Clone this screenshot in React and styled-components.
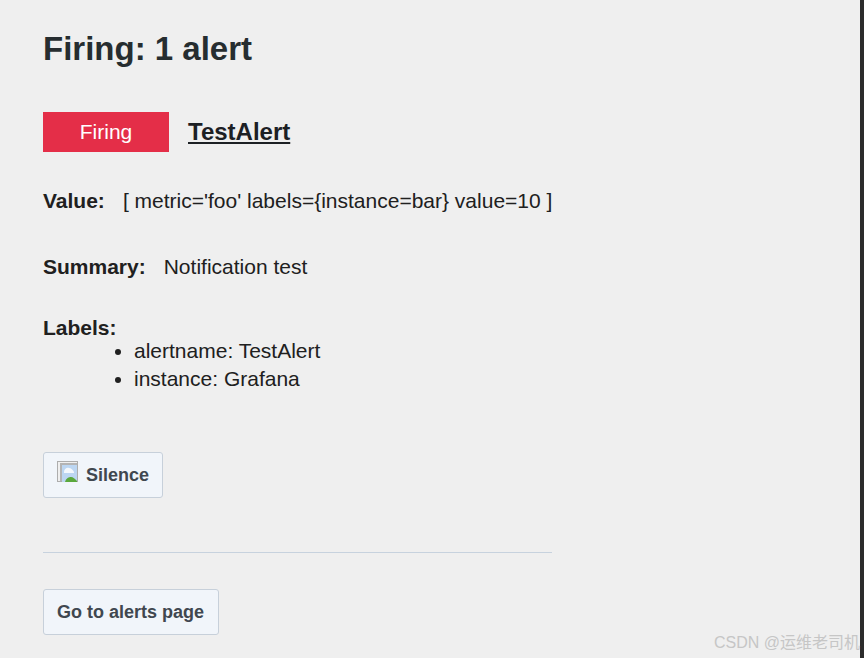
import React from "react";
import styled, { createGlobalStyle } from "styled-components";

const Global = createGlobalStyle`
  html, body { margin: 0; padding: 0; height: 100%; }
  body { background: #efefef; font-family: "Liberation Sans", Arial, sans-serif; overflow: hidden; }
`;
const Page = styled.div`
  display: flex;
  width: 864px;
  height: 658px;
  overflow: hidden;
`;
const Main = styled.main`
  flex: 1;
  display: flex;
  flex-direction: column;
  align-items: flex-start;
  padding-left: 43px;
  color: #202020;
  font-size: 21px;
  line-height: 28px;
`;
const Edge = styled.div`
  width: 4px;
  background: #2b2b2b;
`;
const Title = styled.h1`
  margin: 30px 0 0;
  font-size: 33px;
  line-height: 38px;
  font-weight: 700;
  color: #262d30;
`;
const Header = styled.div`
  display: flex;
  align-items: center;
  gap: 19px;
  margin-top: 44px;
`;
const Status = styled.div`
  width: 126px;
  height: 40px;
  display: flex;
  align-items: center;
  justify-content: center;
  background: #e42e48;
  color: #fff;
`;
const AlertLink = styled.a`
  font-size: 24px;
  font-weight: 700;
  color: #1c2024;
  text-decoration: underline;
`;
const Field = styled.div`
  margin-top: ${(p) => p.$top}px;
`;
const Label = styled.strong`
  font-weight: 700;
  margin-right: 18px;
`;
const ListLabel = styled.strong`
  display: block;
  font-weight: 700;
  line-height: 20px;
`;
const LabelList = styled.ul`
  margin: -1px 0 0;
  padding-left: 91px;
`;
const Button = styled.a`
  display: flex;
  align-items: center;
  gap: ${(p) => p.$gap || 0}px;
  width: ${(p) => p.$width}px;
  height: 46px;
  box-sizing: border-box;
  margin-top: ${(p) => p.$top}px;
  padding-left: 13px;
  background: #f1f5fa;
  border: 1px solid #c7d0da;
  border-radius: 3px;
  font-size: 18px;
  font-weight: 700;
  color: #40474f;
  white-space: nowrap;
`;
const Rule = styled.hr`
  width: 509px;
  height: 1px;
  margin: 54px 0 0;
  border: 0;
  background: #c7d2de;
`;
const Watermark = styled.div`
  position: absolute;
  right: 4px;
  bottom: 5px;
  font-family: "Liberation Sans", "Noto Sans CJK SC", sans-serif;
  font-size: 16px;
  line-height: 20px;
  color: #c6c6c6;
  white-space: nowrap;
`;
const IconImage = styled.svg`
  flex: none;
  margin-top: -7px;
`;

const BrokenImage = () => (
  <IconImage width="21" height="21" viewBox="0 0 21 21">
    <rect x="0.5" y="0.5" width="20" height="20" fill="#efefef" stroke="#adadad" />
    <rect x="3" y="2" width="17" height="18" fill="#b4b4b4" />
    <rect x="5" y="4" width="15" height="17" fill="#bcd6f2" />
    <path d="M7 11c0-3 3-5 5-4 2 0 4 2 5 4v1H7z" fill="#f4f8fd" />
    <path d="M8 21c1-4 4-5 6-5s4 2 6 4v1z" fill="#5aa83c" />
  </IconImage>
);

export default function App() {
  return (
    <Page>
      <Global />
      <Main>
        <Title>Firing: 1 alert</Title>
        <Header>
          <Status>Firing</Status>
          <AlertLink>TestAlert</AlertLink>
        </Header>
        <Field $top={35}>
          <Label>Value:</Label>[ metric='foo' labels={"{"}instance=bar{"}"} value=10 ]
        </Field>
        <Field $top={38}>
          <Label>Summary:</Label>Notification test
        </Field>
        <Field $top={37}>
          <ListLabel>Labels:</ListLabel>
          <LabelList>
            <li>alertname: TestAlert</li>
            <li>instance: Grafana</li>
          </LabelList>
        </Field>
        <Button $top={59} $gap={8} $width={120}>
          <BrokenImage />
          Silence
        </Button>
        <Rule />
        <Button $top={36} $width={176}>Go to alerts page</Button>
      </Main>
      <Edge />
      <Watermark>CSDN @运维老司机</Watermark>
    </Page>
  );
}
